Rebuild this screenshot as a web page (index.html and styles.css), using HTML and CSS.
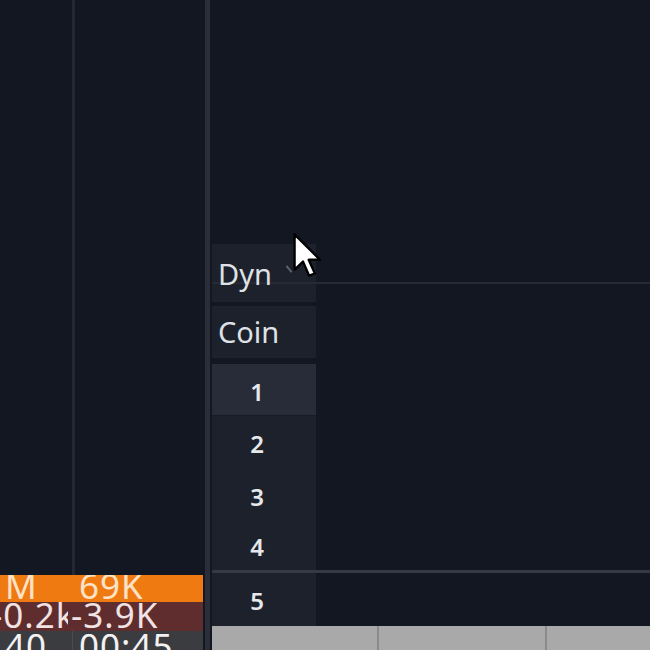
FILE: index.html
```html
<!DOCTYPE html>
<html lang="en">
<head>
  <meta charset="UTF-8">
  <meta name="viewport" content="width=device-width, initial-scale=1.0">
  <title>Dyn / Coin</title>
  <link rel="stylesheet" href="styles.css">
</head>
<body>
  <div class="app">
    <div class="left">
      <div class="left-cols">
        <div class="col col-a"></div>
        <div class="col col-b"></div>
      </div>
      <div class="stats">
        <div class="stat-row orange">
          <span class="c1">M</span>
          <span class="c2">69K</span>
        </div>
        <div class="stat-row brown">
          <span class="c1 clip">-0.2k</span>
          <span class="c2">-3.9K</span>
        </div>
        <div class="stat-row grey">
          <span class="c1">40</span>
          <span class="c2">00:45</span>
        </div>
      </div>
    </div>

    <div class="divider"></div>

    <div class="right">
      <div class="spacer"></div>
      <div class="row row-dyn">
        <div class="cell cell-label"><span class="label-text">Dyn</span><span class="sort"></span></div>
      </div>
      <div class="row row-coin">
        <div class="cell cell-label">Coin</div>
      </div>
      <div class="row num active"><div class="cell">1</div></div>
      <div class="row num"><div class="cell">2</div></div>
      <div class="row num"><div class="cell">3</div></div>
      <div class="row num short"><div class="cell">4</div></div>
      <div class="hline"></div>
      <div class="row num"><div class="cell">5</div></div>
      <div class="bar">
        <div class="bar-seg s1"></div>
        <div class="bar-seg s2"></div>
        <div class="bar-seg s3"></div>
      </div>
    </div>
  </div>

  <!-- mouse pointer over the Dyn header -->
  <svg class="cursor" width="31" height="47" viewBox="0 0 13 20">
    <path d="M1 1 L1 16 L4.6 12.6 L7.2 18.6 L9.6 17.6 L7 11.8 L11.8 11.8 Z" fill="#fff" stroke="#000" stroke-width="1" stroke-linejoin="round"/>
  </svg>
</body>
</html>
```

FILE: styles.css
```css
body {
  margin: 0;
  padding: 0;
  background-color: #131722;
  font-family: "Noto Sans", "Open Sans", sans-serif;
  color: #e2e4e9;
  overflow: hidden;
}
.app {
  display: flex;
  width: 650px;
  height: 650px;
  overflow: hidden;
}
.left {
  width: 205px;
  display: flex;
  flex-direction: column;
}
.left-cols {
  flex: 1;
  display: flex;
}
.col-a {
  width: 72px;
  border-right: 3px solid #252833;
}
.col-b {
  flex: 1;
}
.stats {
  height: 75px;
  padding-right: 2px;
}
.stat-row {
  display: flex;
  overflow: hidden;
  font-size: 35px;
  letter-spacing: 1px;
  white-space: nowrap;
}
.stat-row span {
  overflow: hidden;
}
.c1 {
  width: 68px;
  padding-left: 5px;
}
.c2 {
  flex: 1;
  padding-left: 6px;
}
.orange {
  height: 27px;
  line-height: 21px;
  background-color: #ef7a12;
  color: #fde2c6;
}
.brown {
  height: 29px;
  line-height: 25px;
  background-color: #602d2e;
  color: #f1e3e3;
}
.brown .c1 {
  padding-left: 0;
  text-indent: -9px;
  width: 68px;
}
.brown .c2 {
  padding-left: 3px;
}
.grey {
  height: 19px;
  line-height: 29px;
  background-color: #3a3c40;
  color: #f2f2f2;
}
.grey .c1 {
  border-right: 1px solid #4a4c50;
  width: 67px;
}
.divider {
  width: 5px;
  background-color: #2b2e39;
}
.right {
  flex: 1;
  display: flex;
  flex-direction: column;
  padding-left: 2px;
}
.spacer {
  height: 244px;
}
.row {
  display: flex;
  flex-shrink: 0;
}
.cell {
  width: 104px;
  background-color: #1d212b;
  box-sizing: border-box;
}
.cell-label {
  padding-left: 6px;
  font-size: 29px;
  color: #dfe1e6;
}
.row-dyn {
  height: 58px;
  position: relative;
}
.row-dyn .cell-label {
  line-height: 58px;
  padding-top: 1px;
}
.row-dyn::after {
  content: "";
  position: absolute;
  left: 0;
  right: 0;
  top: 38px;
  height: 2px;
  background-color: #262a35;
}
.label-text {
  position: relative;
  z-index: 1;
}
.sort {
  position: absolute;
  left: 76px;
  top: 21px;
  width: 2px;
  height: 8px;
  background-color: #5d616b;
  transform: rotate(-40deg);
}
.row-coin {
  height: 52px;
  margin-top: 4px;
}
.row-coin .cell-label {
  line-height: 52px;
}
.num {
  height: 53px;
}
.num .cell {
  text-align: center;
  padding-right: 14px;
  padding-top: 3px;
  font-size: 24px;
  font-weight: 600;
  line-height: 50px;
  color: #e6e8ec;
}
.active {
  height: 52px;
  margin-top: 6px;
}
.active .cell {
  background-color: #272c38;
  border-bottom: 1px solid #181b25;
}
.short {
  height: 48px;
}
.short .cell {
  line-height: 48px;
  padding-top: 1px;
}
.hline {
  height: 3px;
  background-color: #363944;
  flex-shrink: 0;
}
.bar {
  flex: 1;
  display: flex;
  background-color: #a9a9a9;
}
.bar-seg {
  border-right: 2px solid #8b8b8b;
}
.s1 {
  width: 165px;
}
.s2 {
  width: 166px;
}
.s3 {
  flex: 1;
  border-right: none;
}
.cursor {
  position: absolute;
  left: 292px;
  top: 232px;
}
```
